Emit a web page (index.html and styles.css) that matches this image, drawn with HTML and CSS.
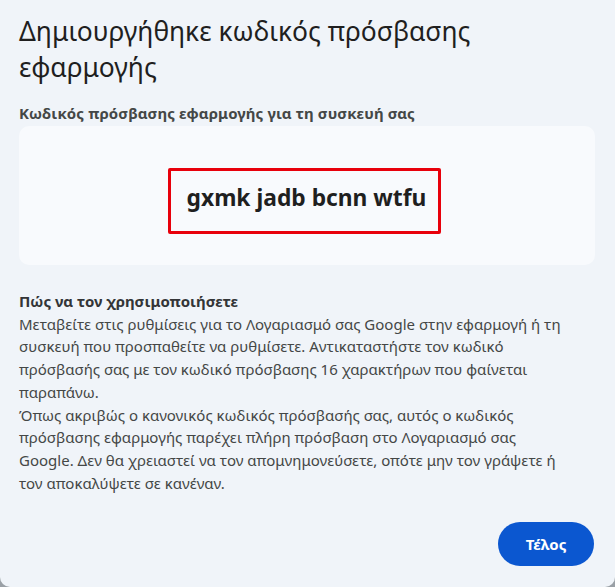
FILE: index.html
```html
<!DOCTYPE html>
<html lang="el">
<head>
<meta charset="utf-8">
<title>Κωδικός πρόσβασης εφαρμογής</title>
<link rel="stylesheet" href="styles.css">
</head>
<body>
<div class="dialog">
  <h1 class="title">Δημιουργήθηκε κωδικός πρόσβασης<br>εφαρμογής</h1>
  <div class="label">Κωδικός πρόσβασης εφαρμογής για τη συσκευή σας</div>
  <div class="card">
    <div class="highlight"><span class="code">gxmk jadb bcnn wtfu</span></div>
  </div>
  <div class="howto">
    <div class="howto-title">Πώς να τον χρησιμοποιήσετε</div>
    <p class="howto-text">Μεταβείτε στις ρυθμίσεις για το Λογαριασμό σας Google στην εφαρμογή ή τη<br>συσκευή που προσπαθείτε να ρυθμίσετε. Αντικαταστήστε τον κωδικό<br>πρόσβασής σας με τον κωδικό πρόσβασης 16 χαρακτήρων που φαίνεται<br>παραπάνω.</p>
    <p class="howto-text">Όπως ακριβώς ο κανονικός κωδικός πρόσβασής σας, αυτός ο κωδικός<br>πρόσβασης εφαρμογής παρέχει πλήρη πρόσβαση στο Λογαριασμό σας<br>Google. Δεν θα χρειαστεί να τον απομνημονεύσετε, οπότε μην τον γράψετε ή<br>τον αποκαλύψετε σε κανέναν.</p>
  </div>
  <div class="actions">
    <button class="btn-done" type="button">Τέλος</button>
  </div>
</div>
</body>
</html>
```

FILE: styles.css
```css
html, body {
  margin: 0;
  padding: 0;
  height: 100%;
}
body {
  background: #9aa0a6;
  font-family: "Noto Sans", "Open Sans", sans-serif;
  color: #1f1f1f;
}
.dialog {
  box-sizing: border-box;
  height: 587px;
  background: #f0f4f9;
  border-radius: 0 0 10px 10px;
  padding: 13px 20px 0 19px;
  display: flex;
  flex-direction: column;
}
.title {
  margin: 0;
  font-size: 26.4px;
  line-height: 36px;
  font-weight: 400;
  color: #1f1f1f;
}
.label {
  margin-top: 18px;
  font-size: 15px;
  line-height: 21px;
  font-weight: 700;
  letter-spacing: 0.1px;
  color: #444746;
}
.card {
  margin-top: 2px;
  height: 139px;
  background: #f8fafd;
  border-radius: 10px;
  display: flex;
  align-items: center;
  justify-content: center;
}
.highlight {
  box-sizing: border-box;
  height: 66px;
  width: 273px;
  margin: 11px 5px 0 0;
  border: 3px solid #e8000b;
  border-radius: 2px;
  display: flex;
  align-items: center;
  justify-content: center;
  padding: 0 0 7px 4px;
}
.code {
  font-size: 22.8px;
  font-weight: 700;
  color: #1f1f1f;
  white-space: nowrap;
}
.howto {
  margin-top: 25px;
  font-size: 15px;
  line-height: 22.7px;
  color: #444746;
}
.howto-title {
  font-weight: 700;
  color: #333537;
}
.howto-text {
  margin: 0;
  white-space: nowrap;
}
.actions {
  margin-top: auto;
  margin-bottom: 21px;
  display: flex;
  justify-content: flex-end;
  padding-right: 1px;
}
.btn-done {
  width: 96px;
  height: 44px;
  border: none;
  border-radius: 22px;
  background: #0b57d0;
  color: #ffffff;
  font-family: inherit;
  font-size: 15px;
  font-weight: 700;
  cursor: pointer;
}
```
